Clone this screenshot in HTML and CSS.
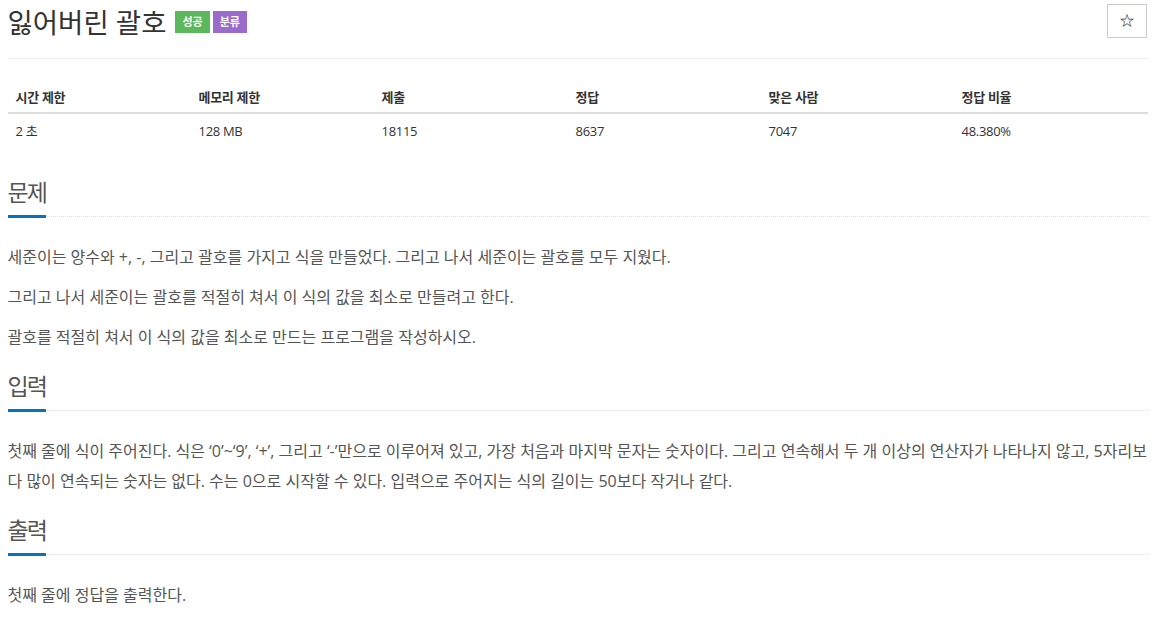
FILE: index.html
```html
<!DOCTYPE html>
<html lang="ko">
<head>
    <meta charset="UTF-8">
    <title>잃어버린 괄호</title>
    <link rel="stylesheet" href="styles.css">
</head>
<body>
    <div class="container">
        <div class="page-header">
            <h1>
                <span class="problem-title">잃어버린 괄호</span>
                <span class="label label-success">성공</span>
                <span class="label label-purple">분류</span>
            </h1>
            <button class="star-btn">&#9734;</button>
        </div>

        <table class="problem-info">
            <thead>
                <tr>
                    <th>시간 제한</th>
                    <th>메모리 제한</th>
                    <th>제출</th>
                    <th>정답</th>
                    <th>맞은 사람</th>
                    <th>정답 비율</th>
                </tr>
            </thead>
            <tbody>
                <tr>
                    <td>2 초</td>
                    <td>128 MB</td>
                    <td>18115</td>
                    <td>8637</td>
                    <td>7047</td>
                    <td>48.380%</td>
                </tr>
            </tbody>
        </table>

        <section class="problem-section">
            <div class="headline">
                <h2>문제</h2>
            </div>
            <div class="problem-text">
                <p>세준이는 양수와 +, -, 그리고 괄호를 가지고 식을 만들었다. 그리고 나서 세준이는 괄호를 모두 지웠다.</p>
                <p>그리고 나서 세준이는 괄호를 적절히 쳐서 이 식의 값을 최소로 만들려고 한다.</p>
                <p>괄호를 적절히 쳐서 이 식의 값을 최소로 만드는 프로그램을 작성하시오.</p>
            </div>
        </section>

        <section class="problem-section">
            <div class="headline">
                <h2>입력</h2>
            </div>
            <div class="problem-text">
                <p>첫째 줄에 식이 주어진다. 식은 ‘0’~‘9’, ‘+’, 그리고 ‘-’만으로 이루어져 있고, 가장 처음과 마지막 문자는 숫자이다. 그리고 연속해서 두 개 이상의 연산자가 나타나지 않고, 5자리보다 많이 연속되는 숫자는 없다. 수는 0으로 시작할 수 있다. 입력으로 주어지는 식의 길이는 50보다 작거나 같다.</p>
            </div>
        </section>

        <section class="problem-section">
            <div class="headline">
                <h2>출력</h2>
            </div>
            <div class="problem-text">
                <p>첫째 줄에 정답을 출력한다.</p>
            </div>
        </section>
    </div>
</body>
</html>
```

FILE: styles.css
```css
body {
    margin: 0;
    padding: 0;
    background-color: #fff;
    color: #555;
    font-family: "Open Sans", "Noto Sans CJK KR", sans-serif;
    font-size: 14px;
}

.container {
    width: 1140px;
    margin: 0 auto;
}

.page-header {
    display: flex;
    justify-content: space-between;
    align-items: flex-start;
    padding-top: 4px;
    padding-bottom: 20px;
    border-bottom: 1px solid #eee;
}

.page-header h1 {
    margin: 0;
    display: flex;
    align-items: center;
    height: 34px;
    font-weight: normal;
}

.problem-title {
    font-size: 27.5px;
    color: #333;
    margin-right: 9px;
}

.label {
    display: inline-block;
    height: 22px;
    line-height: 22px;
    padding: 0 7px;
    margin-right: 3px;
    margin-top: 2px;
    font-size: 11px;
    font-weight: bold;
    color: #fff;
}

.label-success {
    background-color: #5cb85c;
}

.label-purple {
    background-color: #9b6bcc;
}

.star-btn {
    width: 40px;
    height: 34px;
    margin-right: 1px;
    background-color: #fff;
    border: 1px solid #ccc;
    font-size: 16px;
    color: #333;
    cursor: pointer;
}

.problem-info {
    width: 100%;
    margin-top: 21px;
    margin-bottom: 19px;
    border-collapse: collapse;
    table-layout: fixed;
    font-size: 13px;
    letter-spacing: -0.3px;
}

/* column widths without the 16px of padding */
.problem-info th:nth-child(1),
.problem-info th:nth-child(2) {
    width: 167px;
}

.problem-info th:nth-child(3) {
    width: 178px;
}

.problem-info th:nth-child(4),
.problem-info th:nth-child(5) {
    width: 177px;
}

.problem-info th,
.problem-info td {
    text-align: left;
    padding: 8px;
    line-height: 18px;
    color: #333;
}

.problem-info th {
    padding-bottom: 6px;
    font-weight: bold;
    border-bottom: 2px solid #ddd;
}

.problem-section {
    margin-top: 9px;
}

.headline {
    border-bottom: 1px dotted #dde;
}

.headline h2 {
    display: inline-block;
    margin: 0;
    padding: 12px 0 10px;
    font-size: 23px;
    letter-spacing: -2px;
    font-weight: normal;
    color: #555;
    line-height: 26px;
    border-bottom: 3px solid #0076c0;
    margin-bottom: -2px;
}

.problem-text {
    padding-top: 25px;
    font-size: 16px;
    word-break: break-all;
}

.problem-text p {
    margin: 0 0 10px;
    line-height: 30px;
}

.problem-text p:last-child {
    margin-bottom: 0;
}
```
